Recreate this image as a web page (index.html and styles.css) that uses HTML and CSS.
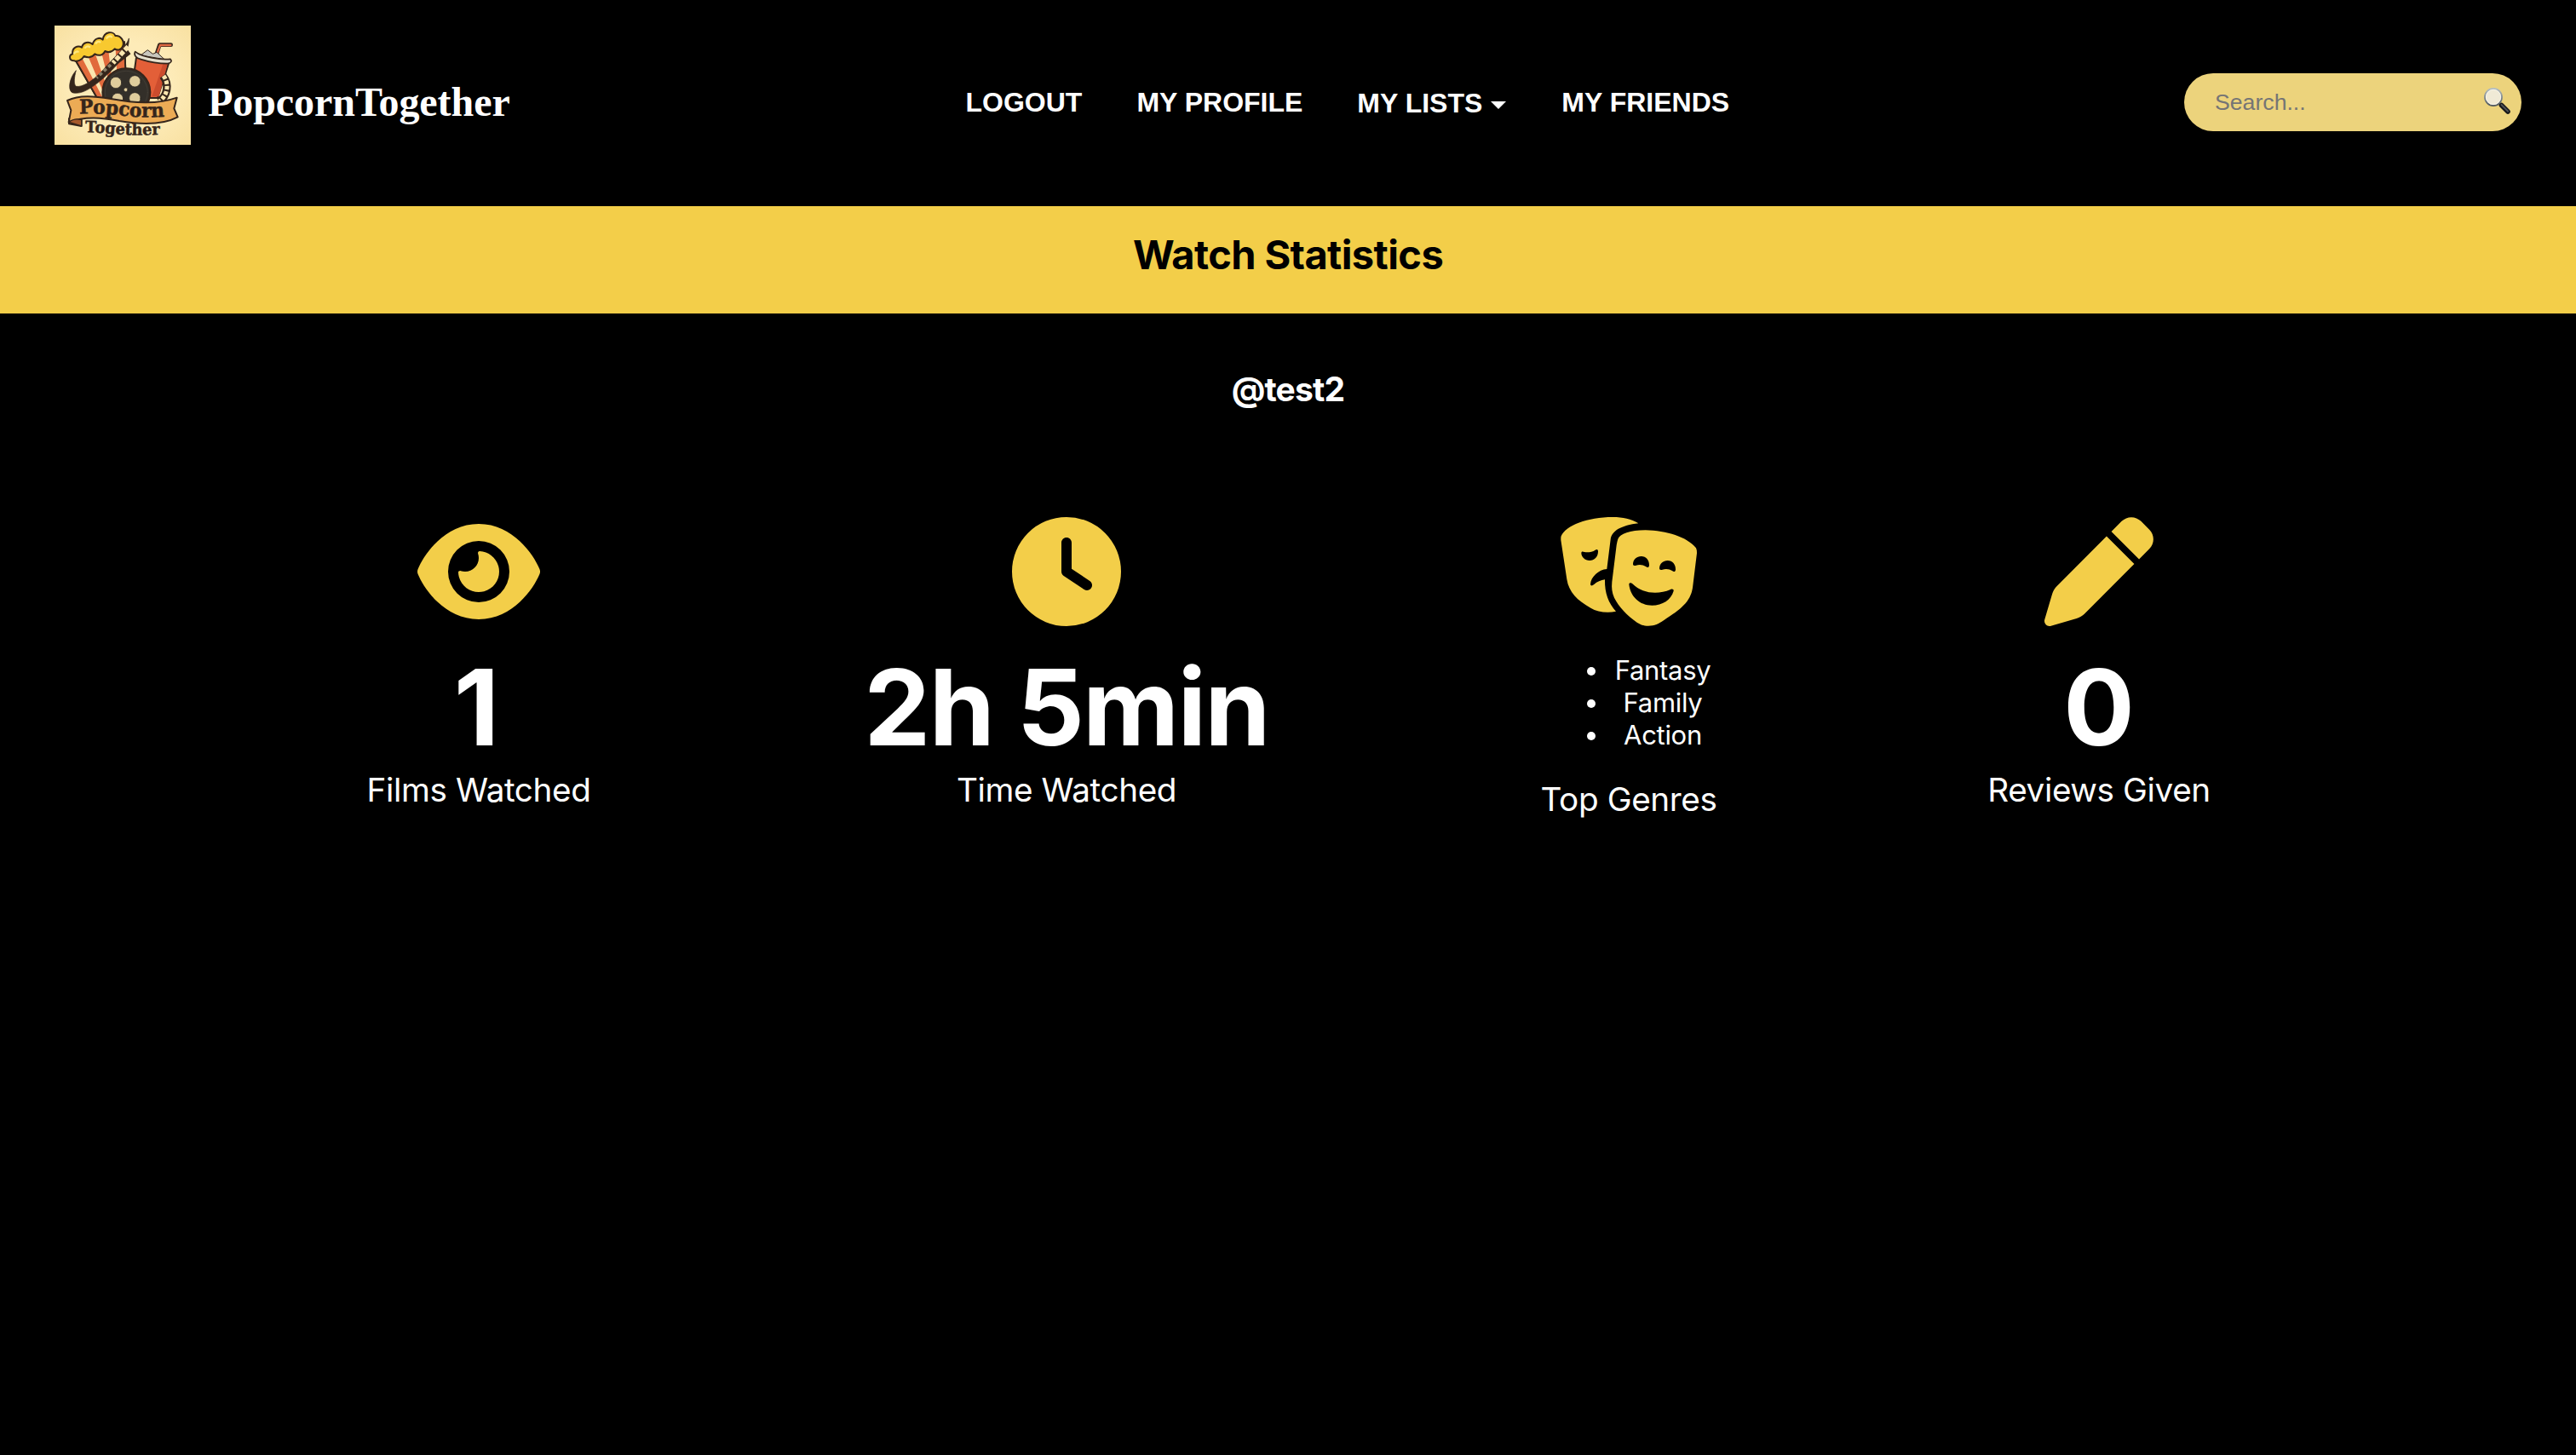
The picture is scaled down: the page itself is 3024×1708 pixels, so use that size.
FILE: index.html
```html
<!DOCTYPE html>
<html lang="en">
<head>
<meta charset="utf-8">
<title>PopcornTogether</title>
<link rel="stylesheet" href="styles.css">
</head>
<body>
<header class="header">
  <div class="brand">
    <svg class="logo" viewBox="42 30 480 420">
      <defs>
        <radialGradient id="paper" r="0.72"><stop offset="0.5" stop-color="#fdebb8"/><stop offset="1" stop-color="#f8e0a0"/></radialGradient>
        <path id="arc1" d="M130 341C190 338 240 342 290 348S390 354 432 350"/>
        <path id="arc2" d="M150 406C210 406 260 414 310 415S380 415 418 414"/>
        <clipPath id="bucket"><path d="M110 142L288 88L292 190L250 285H192Z"/></clipPath>
      </defs>
      <rect x="42" y="30" width="480" height="420" fill="url(#paper)"/>
      <g stroke="#35251b" stroke-width="6" stroke-linejoin="round" stroke-linecap="round">
        <path d="M110 142L288 88L292 190L250 285H192Z" fill="#fbe6b0"/>
        <g clip-path="url(#bucket)" stroke="none" fill="#e16a3c">
          <path d="M108 140L134 134L212 285H190ZM156 128L182 120L224 240L216 270ZM204 112L230 104L244 215H230ZM256 98L295 84V200H262Z"/>
        </g>
        <path d="M110 142L192 285M288 88L292 190" fill="none"/>
        <path d="M112 154C92 154 92 134 106 130C102 108 124 98 138 107C142 88 164 84 176 96C182 74 202 70 212 80C216 50 250 48 256 66C276 64 290 86 282 104C276 118 262 118 254 112C242 126 228 124 220 120C212 138 194 136 184 130C172 146 154 142 146 138C138 152 122 158 112 154Z" fill="#f8c92f"/>
        <path d="M111 128q6-8 14-6M150 108q8-8 15-3M188 92q8-8 14-4M226 74q10-10 17-4" fill="none" stroke="#ffe77e" stroke-width="7"/>
        <path d="M330 142L445 160L405 285H310Z" fill="#e35f38"/>
        <path d="M424 165L385 280H410L440 165Z" fill="#cc4c2d" stroke="none"/>
        <path d="M400 134L412 98H452" fill="none" stroke-width="14"/>
        <path d="M401 134L414 99H451" fill="none" stroke="#df6843" stroke-width="7"/>
        <path d="M346 134L370 116L388 130L402 124L428 148Z" fill="#c8c6bd" stroke-width="3"/>
        <path d="M326 122C320 134 328 144 346 149C380 160 410 164 440 164C454 162 456 154 450 148C420 152 350 142 326 122Z" fill="#e5dfcc" stroke-width="5"/>
        <path d="M424 207C448 238 439 278 410 298" fill="none" stroke-width="28" stroke-linecap="butt"/>
        <path d="M426 207C448 238 439 278 410 298" fill="none" stroke="#fbe6b0" stroke-width="15" stroke-dasharray="13 6" stroke-linecap="butt"/>
        <path d="M304 76C292 110 250 142 208 192C175 226 140 248 118 244C108 236 112 210 118 188C94 214 88 256 104 266C140 276 180 244 216 214C252 180 306 132 304 76Z" fill="#35251b" stroke-width="2"/>
        <path d="M303 120L252 160" fill="none" stroke="#35251b" stroke-width="24" stroke-linecap="butt"/>
        <path d="M301 104L248 162" fill="none" stroke="#fbe6b0" stroke-width="16" stroke-dasharray="17 6" stroke-linecap="butt"/>
        <path d="M240 168L190 214" fill="none" stroke="#8b8069" stroke-width="11" stroke-dasharray="12 9" stroke-linecap="butt"/>
        <circle cx="295" cy="265" r="84" fill="#332f29"/>
        <circle cx="295" cy="265" r="75" fill="none" stroke="#4a443b" stroke-width="2"/>
        <g fill="#e0cd9c" stroke="#28231e" stroke-width="2"><circle cx="258" cy="231" r="20"/><circle cx="325" cy="226" r="20"/><circle cx="264" cy="288" r="20"/><circle cx="325" cy="286" r="20"/><circle cx="293" cy="256" r="7"/></g>
        <path d="M93 358V376L137 384V358Z" fill="#a85a2c"/>
        <path d="M87 294C130 274 180 278 240 288C320 302 400 310 473 284L463 322L476 352C420 382 340 378 270 366C210 354 150 348 92 370L100 328Z" fill="#ecab55"/>
        <path d="M93 370C105 360 120 357 137 362V384Z" fill="#a85a2c" stroke-width="4"/>
      </g>
      <g class="logo-text">
        <text font-size="69"><textPath href="#arc1" textLength="300" lengthAdjust="spacingAndGlyphs">Popcorn</textPath></text>
        <text font-size="56"><textPath href="#arc2" textLength="264" lengthAdjust="spacingAndGlyphs">Together</textPath></text>
      </g>
    </svg>
    <span class="brand-name">PopcornTogether</span>
  </div>
  <nav class="nav">
    <a>LOGOUT</a>
    <a>MY PROFILE</a>
    <a class="lists">MY LISTS<svg class="caret" viewBox="0 0 18 9"><path d="M0 0H18L9 9Z" fill="#fff"/></svg></a>
    <a>MY FRIENDS</a>
  </nav>
  <div class="search">
    <span>Search...</span>
    <svg class="glass" viewBox="0 0 32 32">
      <defs><linearGradient id="handle" x1="0" y1="1" x2="1" y2="0"><stop offset="0" stop-color="#111"/><stop offset=".5" stop-color="#55585d"/><stop offset="1" stop-color="#0c0c0c"/></linearGradient>
      <linearGradient id="rim" x1="0" y1="0" x2="0" y2="1"><stop offset="0" stop-color="#b5bfc2"/><stop offset="1" stop-color="#50585d"/></linearGradient></defs>
      <path d="M17 18L21 21" stroke="#777" stroke-width="2.5"/>
      <path d="M20.5 20.5L28 28" stroke="#16171a" stroke-width="5.6" stroke-linecap="round"/>
      <path d="M20.5 20L28 27.5" stroke="url(#handle)" stroke-width="2" stroke-linecap="round"/>
      <circle cx="11" cy="11" r="10" fill="#f0ead6" stroke="url(#rim)" stroke-width="1.8"/>
      <circle cx="11" cy="11" r="8.7" fill="none" stroke="#fbf9f0" stroke-width=".8"/>
    </svg>
  </div>
</header>
<section class="title-bar"><h1>Watch Statistics</h1></section>
<h2 class="user">@test2</h2>
<main class="stats">
  <div class="stat">
    <svg class="icon" viewBox="0 0 576 512"><path d="M288 32c-80.800 0-145.500 36.800-192.600 80.600C48.600 156 17.300 208 2.500 243.700c-3.300 7.900-3.300 16.700 0 24.600C17.300 304 48.600 356 95.400 399.400C142.500 443.200 207.200 480 288 480s145.500-36.800 192.600-80.600c46.800-43.500 78.100-95.400 93-131.100c3.300-7.900 3.300-16.700 0-24.600c-14.900-35.700-46.200-87.700-93-131.100C433.500 68.800 368.800 32 288 32zM144 256a144 144 0 1 1 288 0 144 144 0 1 1 -288 0zm144-64c0 35.300-28.700 64-64 64c-7.100 0-13.900-1.200-20.300-3.300c-5.500-1.800-11.900 1.600-11.700 7.400c.3 6.900 1.300 13.800 3.200 20.700c13.700 51.200 66.400 81.600 117.600 67.900s81.600-66.400 67.900-117.600c-11.100-41.500-47.800-69.400-88.600-71.100c-5.800-.2-9.200 6.100-7.400 11.700c2.100 6.400 3.300 13.200 3.300 20.300z"/></svg>
    <div class="number one">1</div>
    <div class="label">Films Watched</div>
  </div>
  <div class="stat">
    <svg class="icon" viewBox="0 0 512 512"><path d="M256 0a256 256 0 1 1 0 512A256 256 0 1 1 256 0zM232 120V256c0 8 4 15.500 10.700 20l96 64c11 7.400 25.900 4.400 33.300-6.700s4.400-25.900-6.700-33.300L280 243.200V120c0-13.300-10.700-24-24-24s-24 10.700-24 24z"/></svg>
    <div class="number time">2h 5min</div>
    <div class="label">Time Watched</div>
  </div>
  <div class="stat">
    <svg class="icon" viewBox="156 51 480 384">
      <path fill-rule="evenodd" d="M158 118C175 80 250 51 340 51C375 51 405 58 430 73C370 80 335 100 332 130L319 234C290 236 262 262 261 288C262 294 268 293 274 288C284 279 298 273 312 271C311 320 325 355 351 383C320 390 285 385 262 371C215 345 185 315 178 270L157 132Q156 124 158 118ZM229 178C229 170 235 172 240 174C252 176 268 174 278 167C284 163 288 166 288 172C288 192 275 204 258 204C242 204 229 192 229 178Z"/>
      <path fill-rule="evenodd" d="M358 128C365 110 400 97 455 97C530 99 600 120 633 160Q636 166 636 178L621 300C613 350 580 375 520 414C502 427 487 434 465 434C447 434 436 429 425 422C390 398 360 365 345 335C337 318 335 300 337 280L353 150Q355 137 358 128ZM411 216C412 200 424 189 440 189C457 189 469 203 468 221C467 230 461 229 456 225C446 218 432 217 422 221C415 223 411 222 411 216ZM504 231C505 215 517 204 533 204C550 204 562 218 561 236C560 245 554 244 549 240C539 233 525 232 515 236C508 238 504 237 504 231ZM397 288C397 282 404 281 409 286C445 322 500 325 543 306C550 303 555 306 554 311C545 342 515 362 478 362C435 362 402 332 397 288Z"/>
    </svg>
    <ul class="genres"><li>Fantasy</li><li>Family</li><li>Action</li></ul>
    <div class="label">Top Genres</div>
  </div>
  <div class="stat">
    <svg class="icon" viewBox="0 0 512 512"><path d="M362.700 19.300L314.300 67.700 444.300 197.700l48.400-48.400c25-25 25-65.500 0-90.500L453.300 19.300c-25-25-65.500-25-90.500 0zm-71 71L58.600 323.500c-10.400 10.400-18 23.300-22.200 37.400L1 481.200C-1.500 489.700 .8 498.800 7 505s15.300 8.500 23.700 6.100l120.300-35.400c14.100-4.200 27-11.800 37.400-22.200L421.700 220.300 291.700 90.300z"/></svg>
    <div class="number">0</div>
    <div class="label">Reviews Given</div>
  </div>
</main>
</body>
</html>
```
FILE: styles.css
```css
* { box-sizing: border-box; }
body {
  margin: 0;
  min-height: 100vh;
  background: #000;
  color: #fff;
  font-family: Inter, sans-serif;
}
.header {
  display: flex;
  align-items: flex-start;
  height: 242px;
  padding: 30px 64px 0;
}
.brand { display: flex; width: 1069.5px; }
.logo { width: 160px; height: 140px; }
.logo-text {
  font-family: "DejaVu Serif", serif;
  font-weight: bold;
  fill: #35251b;
  stroke: #35251b;
  stroke-width: 1.5;
}
.brand-name {
  margin: 62px 0 0 20px;
  font: bold 48px/56px "Liberation Serif", serif;
  letter-spacing: -0.06px;
}
.nav {
  display: flex;
  gap: 64px;
  margin-top: 72px;
  font: bold 32px/36px "Liberation Sans", sans-serif;
  white-space: nowrap;
}
.lists { display: flex; padding-top: 1px; }
.caret { width: 18px; height: 9px; margin: 16px 1px 0 10px; }
.search {
  display: flex;
  justify-content: space-between;
  width: 396px;
  height: 68px;
  margin: 56px 0 0 auto;
  padding: 17px 12px 0 36px;
  border-radius: 34px;
  background: #ecd37c;
  color: #757575;
  font: 26.67px/34px "Liberation Sans", sans-serif;
}
.glass { width: 32px; height: 32px; }
.title-bar {
  height: 126px;
  padding-top: 28px;
  background: #f3ce49;
  color: #000;
  text-align: center;
}
h1, h2 { margin: 0; }
h1 { font-size: 47px; line-height: 58px; font-weight: 700; letter-spacing: -0.6px; }
.user {
  height: 239px;
  padding-top: 65px;
  font-size: 39px;
  line-height: 48px;
  font-weight: 700;
  letter-spacing: -0.8px;
  text-align: center;
}
.stats {
  display: grid;
  grid-template-columns: 264px 472px 204px 256px;
  column-gap: 322px;
  padding-left: 430px;
}
.stat { display: flex; flex-direction: column; align-items: center; white-space: nowrap; }
.icon { height: 128px; fill: #f3ce49; }
.number {
  margin-top: 22px;
  font-size: 124px;
  line-height: 146px;
  font-weight: 700;
}
.one { padding-right: 5px; }
.time { letter-spacing: -1.8px; }
.label { font-size: 38.7px; line-height: 48px; letter-spacing: -0.4px; }
.genres {
  width: 204px;
  margin: 33px 0 32px;
  padding: 0 0 0 80px;
  list-style: none;
  font-size: 31px;
  line-height: 38px;
  letter-spacing: -0.3px;
  text-align: center;
}
.genres li { position: relative; }
.genres li::before {
  content: "";
  position: absolute;
  left: -27px;
  top: 15px;
  width: 10px;
  height: 10px;
  border-radius: 50%;
  background: #fff;
}
```
